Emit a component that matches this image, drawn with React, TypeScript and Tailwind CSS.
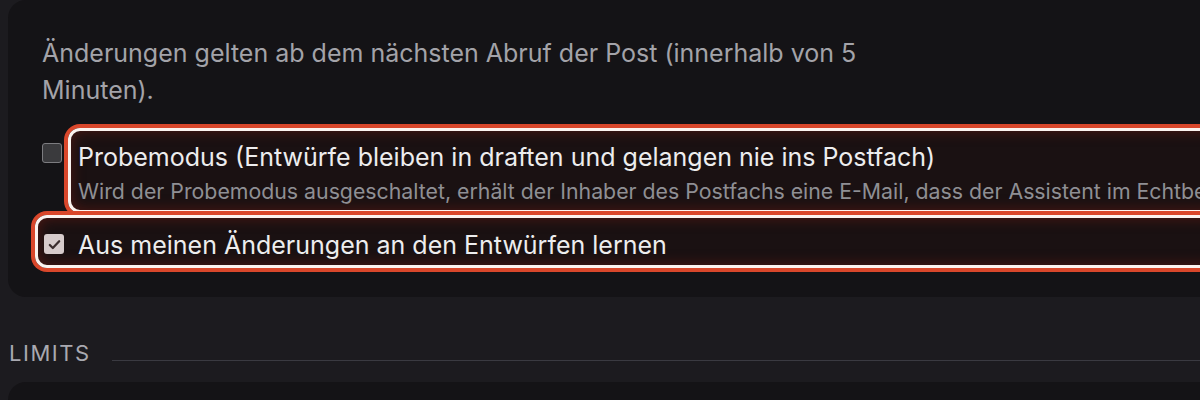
export default function App() {
  return (
    <div className="w-[1200px] h-[400px] overflow-hidden bg-[#1c1b1f] font-['Inter','Noto_Sans',sans-serif]">
      {/* Settings card */}
      <div className="ml-[8px] w-[1260px] rounded-[18px] bg-[#141316] pl-[34px] pt-[35px] pb-[34px]">
        <p className="max-w-[860px] text-[25px] leading-[37px] text-[#a3a3a9]">
          Änderungen gelten ab dem nächsten Abruf der Post (innerhalb von 5 Minuten).
        </p>

        {/* Row: Probemodus */}
        <div className="relative mt-[28px] flex items-start">
          <div className="mt-[6px] h-[20px] w-[20px] shrink-0 rounded-[3px] border-[1.5px] border-[#7c7c80] bg-[#3a3a3d]" />
          <div className="relative ml-[16px] whitespace-nowrap">
            <span className="pointer-events-none absolute top-[-9px] left-[-10px] right-[-120px] h-[85px] rounded-[12px] border-[3px] border-[#fbf3ef] bg-[#2a0d0a]/30 shadow-[0_0_0_4px_#d9472b,inset_0_0_14px_rgba(120,30,20,0.55)]" />
            <div className="relative pt-[2px] text-[25px] leading-[36px] text-[#ededee]">
              Probemodus (Entwürfe bleiben in draften und gelangen nie ins Postfach)
            </div>
            <div className="relative mt-[-2px] text-[21.3px] leading-[36px] text-[#8f8f94]">
              Wird der Probemodus ausgeschaltet, erhält der Inhaber des Postfachs eine E-Mail, dass der Assistent im Echtbetrieb arbeitet.
            </div>
          </div>
        </div>

        {/* Row: Lernen */}
        <div className="relative mt-[17px] flex items-start">
          <span className="pointer-events-none absolute top-[-11px] left-[-7px] right-[-120px] h-[53px] rounded-[12px] border-[3px] border-[#fbf3ef] bg-[#2a0d0a]/30 shadow-[0_0_0_4px_#d9472b,inset_0_0_14px_rgba(120,30,20,0.55)]" />
          <div className="relative ml-[2px] mt-[8px] flex h-[20px] w-[20px] shrink-0 items-center justify-center rounded-[3px] bg-[#d6cbcb]">
            <svg viewBox="0 0 16 16" className="h-[15px] w-[15px]">
              <path d="M3 8.5l3.2 3.2L13 4.5" fill="none" stroke="#3a2c2c" strokeWidth="2.4" strokeLinecap="round" strokeLinejoin="round" />
            </svg>
          </div>
          <div className="relative ml-[14px] mt-[1px] text-[25px] leading-[36px] text-[#ededee]">
            Aus meinen Änderungen an den Entwürfen lernen
          </div>
        </div>
      </div>

      {/* Section header */}
      <div className="mt-[44px] flex items-start pl-[9px]">
        <span className="text-[22px] leading-[24px] tracking-[0.07em] text-[#a9a9b0]">LIMITS</span>
        <div className="ml-[21px] mt-[19px] h-px flex-1 bg-[#3a3a41]" />
      </div>

      {/* Next card */}
      <div className="ml-[8px] mt-[17px] h-[60px] w-[1260px] rounded-t-[18px] bg-[#141316]" />
    </div>
  );
}
